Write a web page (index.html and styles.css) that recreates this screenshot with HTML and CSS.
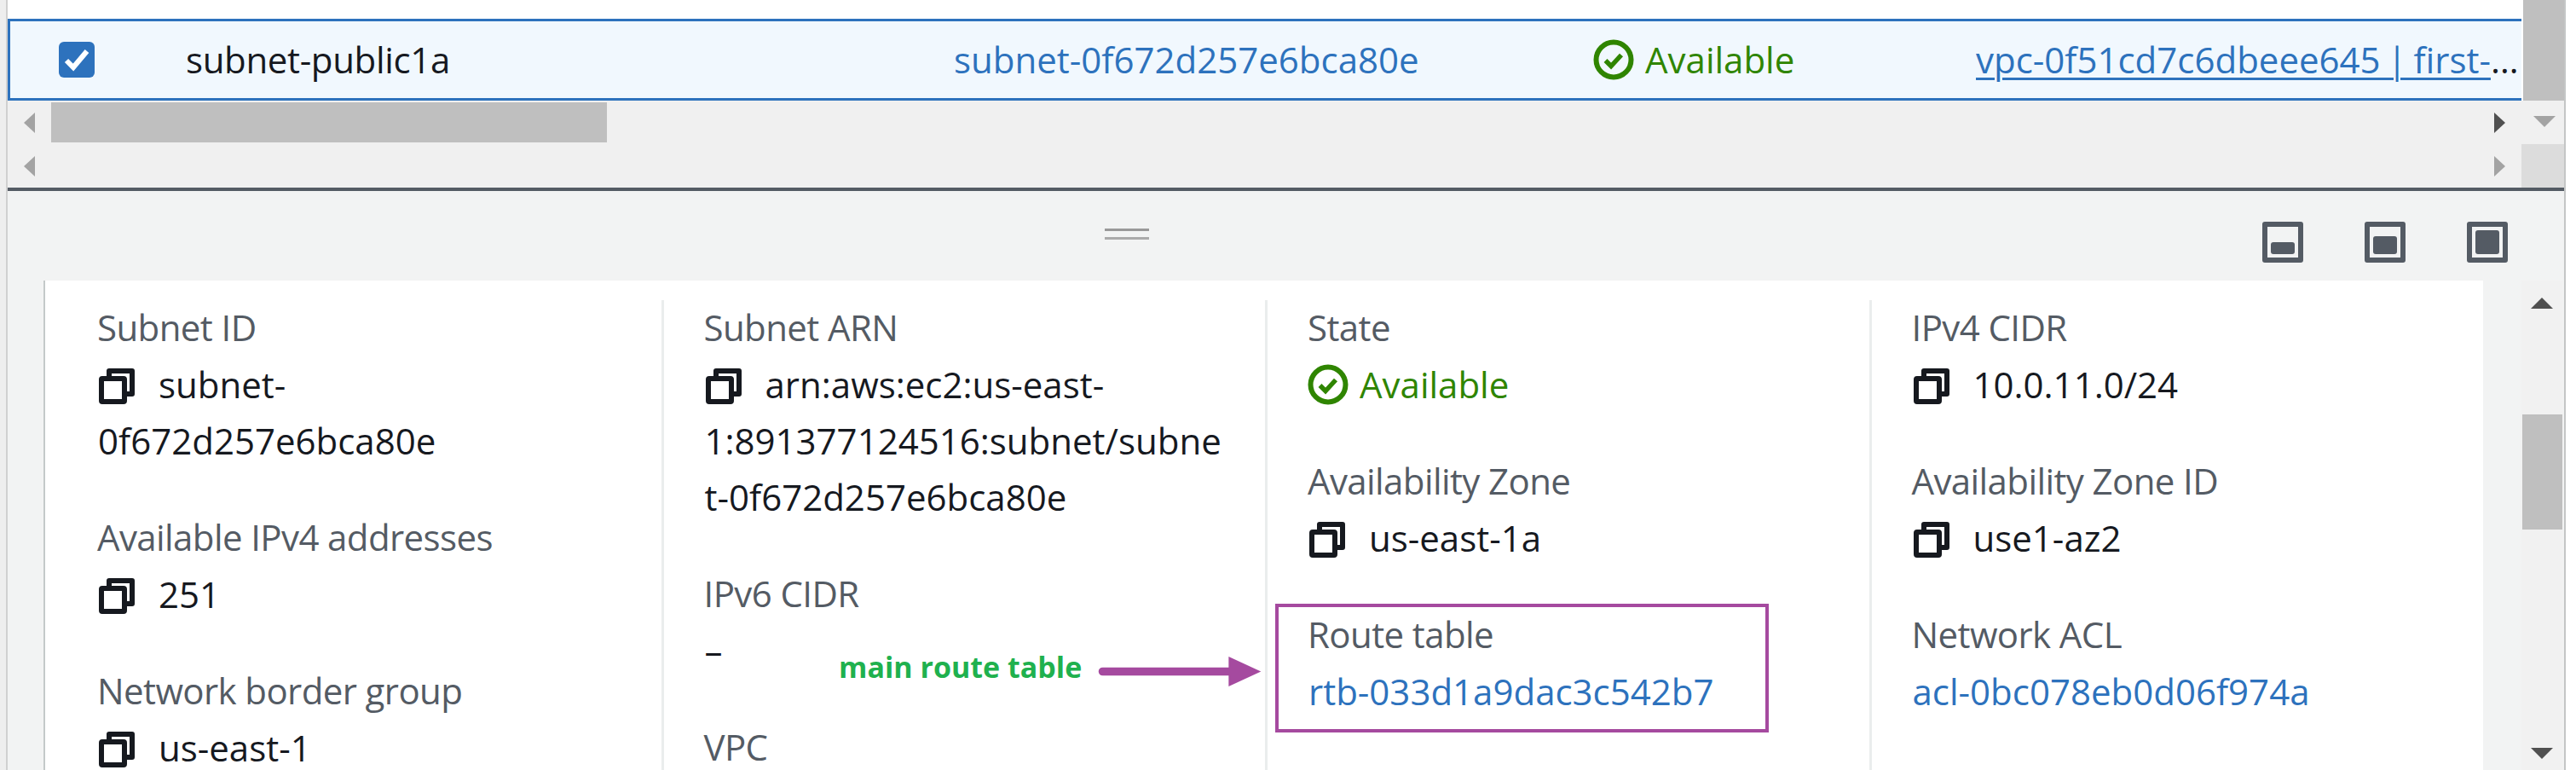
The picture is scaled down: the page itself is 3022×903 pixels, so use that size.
FILE: index.html
```html
<!DOCTYPE html>
<html lang="en">
<head>
<meta charset="utf-8">
<title>Subnet details</title>
<link rel="stylesheet" href="styles.css">
</head>
<body>
<svg class="defs" width="0" height="0" aria-hidden="true">
  <symbol id="copy" viewBox="0 0 48 48">
    <rect x="6" y="15" width="27" height="27" rx="1" fill="none" stroke="currentColor" stroke-width="6"/>
    <path d="M15 12V6H42V33H36" fill="none" stroke="currentColor" stroke-width="6" stroke-linejoin="round"/>
  </symbol>
  <symbol id="ok" viewBox="0 0 48 48">
    <circle cx="24" cy="24" r="20.5" fill="none" stroke="currentColor" stroke-width="6"/>
    <path d="M14.5 25L21 31.5L33 18.5" fill="none" stroke="currentColor" stroke-width="5.5"/>
  </symbol>
</svg>
<div class="shell">
  <div class="edge"></div>
  <div class="main">
    <div class="top">
      <div class="table">
        <div class="row">
          <div class="cell-check">
            <svg class="check" viewBox="0 0 42 42"><rect width="42" height="42" rx="6" fill="#2d72bd"/><path d="M9 22L17 30L33 11" fill="none" stroke="#fff" stroke-width="6"/></svg>
          </div>
          <div class="cell cell-name">subnet-public1a</div>
          <div class="cell link">subnet-0f672d257e6bca80e</div>
          <div class="cell status"><svg class="status-icon"><use href="#ok"/></svg>Available</div>
          <div class="cell cell-vpc"><a class="link underlined">vpc-0f51cd7c6dbeee645 | first-vpc</a></div>
        </div>
        <div class="track">
          <span class="arrow arrow-left"></span>
          <span class="hthumb"></span>
          <span class="arrow arrow-right dark"></span>
        </div>
        <div class="track">
          <span class="arrow arrow-left"></span>
          <span class="arrow arrow-right"></span>
        </div>
      </div>
      <div class="vbar">
        <div class="vthumb"></div>
        <div class="vslot"><span class="arrow arrow-down"></span></div>
        <div class="vblock"></div>
      </div>
    </div>
    <div class="rule"></div>
    <div class="toolbar">
      <div class="handle"></div>
      <div class="panes">
        <span class="pane-icon"><span class="pane-fill fill-low"></span></span>
        <span class="pane-icon"><span class="pane-fill fill-mid"></span></span>
        <span class="pane-icon"><span class="pane-fill fill-high"></span></span>
      </div>
    </div>
    <div class="detail">
      <div class="sheet">
        <div class="col">
          <div class="label">Subnet ID</div>
          <div class="value"><svg class="copy"><use href="#copy"/></svg>subnet-<br>0f672d257e6bca80e</div>
          <div class="label">Available IPv4 addresses</div>
          <div class="value"><svg class="copy"><use href="#copy"/></svg>251</div>
          <div class="label">Network border group</div>
          <div class="value"><svg class="copy"><use href="#copy"/></svg>us-east-1</div>
        </div>
        <div class="col">
          <div class="label">Subnet ARN</div>
          <div class="value"><svg class="copy"><use href="#copy"/></svg>arn:aws:ec2:us-east-<br>1:891377124516:subnet/subne<br>t-0f672d257e6bca80e</div>
          <div class="label">IPv6 CIDR</div>
          <div class="value">–</div>
          <div class="label">VPC</div>
        </div>
        <div class="col">
          <div class="label">State</div>
          <div class="value status status-detail"><svg class="status-icon"><use href="#ok"/></svg>Available</div>
          <div class="label">Availability Zone</div>
          <div class="value"><svg class="copy"><use href="#copy"/></svg>us-east-1a</div>
          <div class="label">Route table</div>
          <div class="value link">rtb-033d1a9dac3c542b7</div>
        </div>
        <div class="col">
          <div class="label">IPv4 CIDR</div>
          <div class="value"><svg class="copy"><use href="#copy"/></svg>10.0.11.0/24</div>
          <div class="label">Availability Zone ID</div>
          <div class="value"><svg class="copy"><use href="#copy"/></svg>use1-az2</div>
          <div class="label">Network ACL</div>
          <div class="value link">acl-0bc078eb0d06f974a</div>
        </div>
      </div>
      <div class="dbar">
        <span class="arrow arrow-up"></span>
        <span class="dthumb"></span>
        <span class="arrow arrow-down dark-down"></span>
      </div>
    </div>
  </div>
  <div class="note-box"></div>
  <div class="note-text">main route table</div>
  <svg class="note-arrow" viewBox="0 0 196 36"><path d="M5 13H157V0L196 18L157 36V23H5A5 5 0 0 1 5 13Z" fill="#a54a9f"/></svg>
</div>
</body>
</html>
```

FILE: styles.css
```css
* { box-sizing: border-box; }
html, body { margin: 0; padding: 0; background: #fff; }
body {
  width: 3022px;
  height: 903px;
  overflow: hidden;
  font-family: "Open Sans", "Noto Sans", sans-serif;
  font-size: 42px;
  line-height: 66px;
  color: #16191f;
}
.defs { position: absolute; }
.shell { position: relative; display: flex; height: 903px; }
.edge { flex: 0 0 9px; background: #eeeeee; border-right: 2px solid #d0d0d0; }
.main {
  flex: 0 0 3001px;
  display: flex;
  flex-direction: column;
  border-right: 2px solid #c4c6c6;
}

/* table */
.top { display: flex; height: 220px; }
.table { flex: 0 0 2949px; padding-top: 22px; }
.row {
  display: grid;
  grid-template-columns: 206px 901px 750px 449px 1fr;
  align-items: center;
  height: 96px;
  background: #f1f8fe;
  border: 3px solid #2d72bd;
  border-right: 0;
}
.cell-check { padding-left: 57px; display: flex; align-items: center; }
.check { width: 42px; height: 42px; display: block; }
.cell { white-space: nowrap; }
.cell-name { letter-spacing: -0.35px; }
.cell-vpc { overflow: hidden; text-overflow: ellipsis; width: 638px; word-spacing: -3px; }
.link { color: #2d72bd; }
.underlined { text-decoration: underline; text-decoration-thickness: 3px; text-underline-offset: 5px; }
.status { color: #2f8500; display: flex; align-items: center; }
.status-icon { width: 48px; height: 48px; margin-right: 13px; flex: none; }
.status-detail { margin-left: -1px; }

/* scrollbars */
.track {
  display: flex;
  align-items: center;
  height: 51px;
  background: #f0f0f0;
  padding: 0 19px;
}
.hthumb { width: 652px; height: 47px; background: #bfbfbf; margin-left: 19px; }
.arrow { display: block; width: 0; height: 0; border-style: solid; border-color: transparent; flex: none; }
.arrow-left { border-width: 12.5px 13px 12.5px 0; border-right-color: #a3a3a3; }
.arrow-right { border-width: 12.5px 0 12.5px 13px; border-left-color: #a3a3a3; margin-left: auto; }
.arrow-right.dark { border-left-color: #505050; }
.arrow-down { border-width: 13px 13px 0 13px; border-top-color: #a3a3a3; }
.arrow-up { border-width: 0 13px 13px 13px; border-bottom-color: #505050; }
.arrow-down.dark-down { border-top-color: #505050; margin-top: auto; margin-bottom: 13px; }
.vbar { flex: 0 0 50px; display: flex; flex-direction: column; }
.vthumb { height: 118px; background: #bfbfbf; margin-left: 2px; }
.vslot { height: 51px; background: #f0f0f0; display: flex; justify-content: center; padding-top: 18px; padding-left: 4px; }
.vblock { height: 51px; background: #dcdcdc; }

.rule { height: 4px; background: #545b64; }

/* toolbar */
.toolbar {
  display: flex;
  justify-content: space-between;
  height: 105px;
  background: #f2f3f3;
  padding: 36px 66px 0 1287px;
}
.handle {
  width: 52px;
  height: 13px;
  margin-top: 8px;
  border-top: 3px solid #999;
  border-bottom: 3px solid #aaa;
}
.panes { display: flex; gap: 72px; }
.pane-icon {
  display: flex;
  align-items: flex-end;
  width: 48px;
  height: 48px;
  border: 6px solid #545b64;
  border-radius: 3px;
  padding: 0 4px 4px;
}
.pane-fill { display: block; width: 28px; background: #545b64; border-radius: 3px; }
.fill-low { height: 14px; }
.fill-mid { height: 21px; }
.fill-high { height: 28px; }

/* detail */
.detail { flex: 1; display: flex; min-height: 0; background: #f2f3f3; padding-left: 42px; }
.sheet {
  flex: 0 0 2862px;
  display: grid;
  grid-template-columns: repeat(4, 708.5px);
  align-items: stretch;
  background: #fff;
  border-left: 2px solid #c4c9c9;
  padding: 23px 0 0 14px;
  overflow: hidden;
}
.col { border-left: 3px solid #eaeded; padding-left: 48px; height: 600px; }
.col:first-child { border-left: 0; }
.label { color: #545b64; margin-top: -1px; margin-bottom: 1px; margin-left: -1px; white-space: nowrap; letter-spacing: -0.6px; }
.value { white-space: nowrap; margin-bottom: 48px; }
.copy { display: inline-block; width: 48px; height: 48px; vertical-align: -10px; margin-left: -2px; margin-right: 25px; color: #16191f; }
.dbar {
  flex: 0 0 48px;
  margin-left: 45px;
  display: flex;
  flex-direction: column;
  align-items: center;
  background: #f1f1f1;
  padding-top: 20px;
}
.dthumb { display: block; width: 47px; height: 135px; margin-top: 124px; background: #bfbfbf; }

/* annotations over the screenshot */
.note-box {
  position: absolute;
  left: 1496px;
  top: 708px;
  width: 579px;
  height: 151px;
  border: 4px solid #a54a9f;
}
.note-text {
  position: absolute;
  left: 984px;
  top: 749px;
  font-size: 34px;
  font-weight: 700;
  color: #1fb14e;
  white-space: nowrap;
}
.note-arrow { position: absolute; left: 1286px; top: 770px; width: 196px; height: 35px; }
```
